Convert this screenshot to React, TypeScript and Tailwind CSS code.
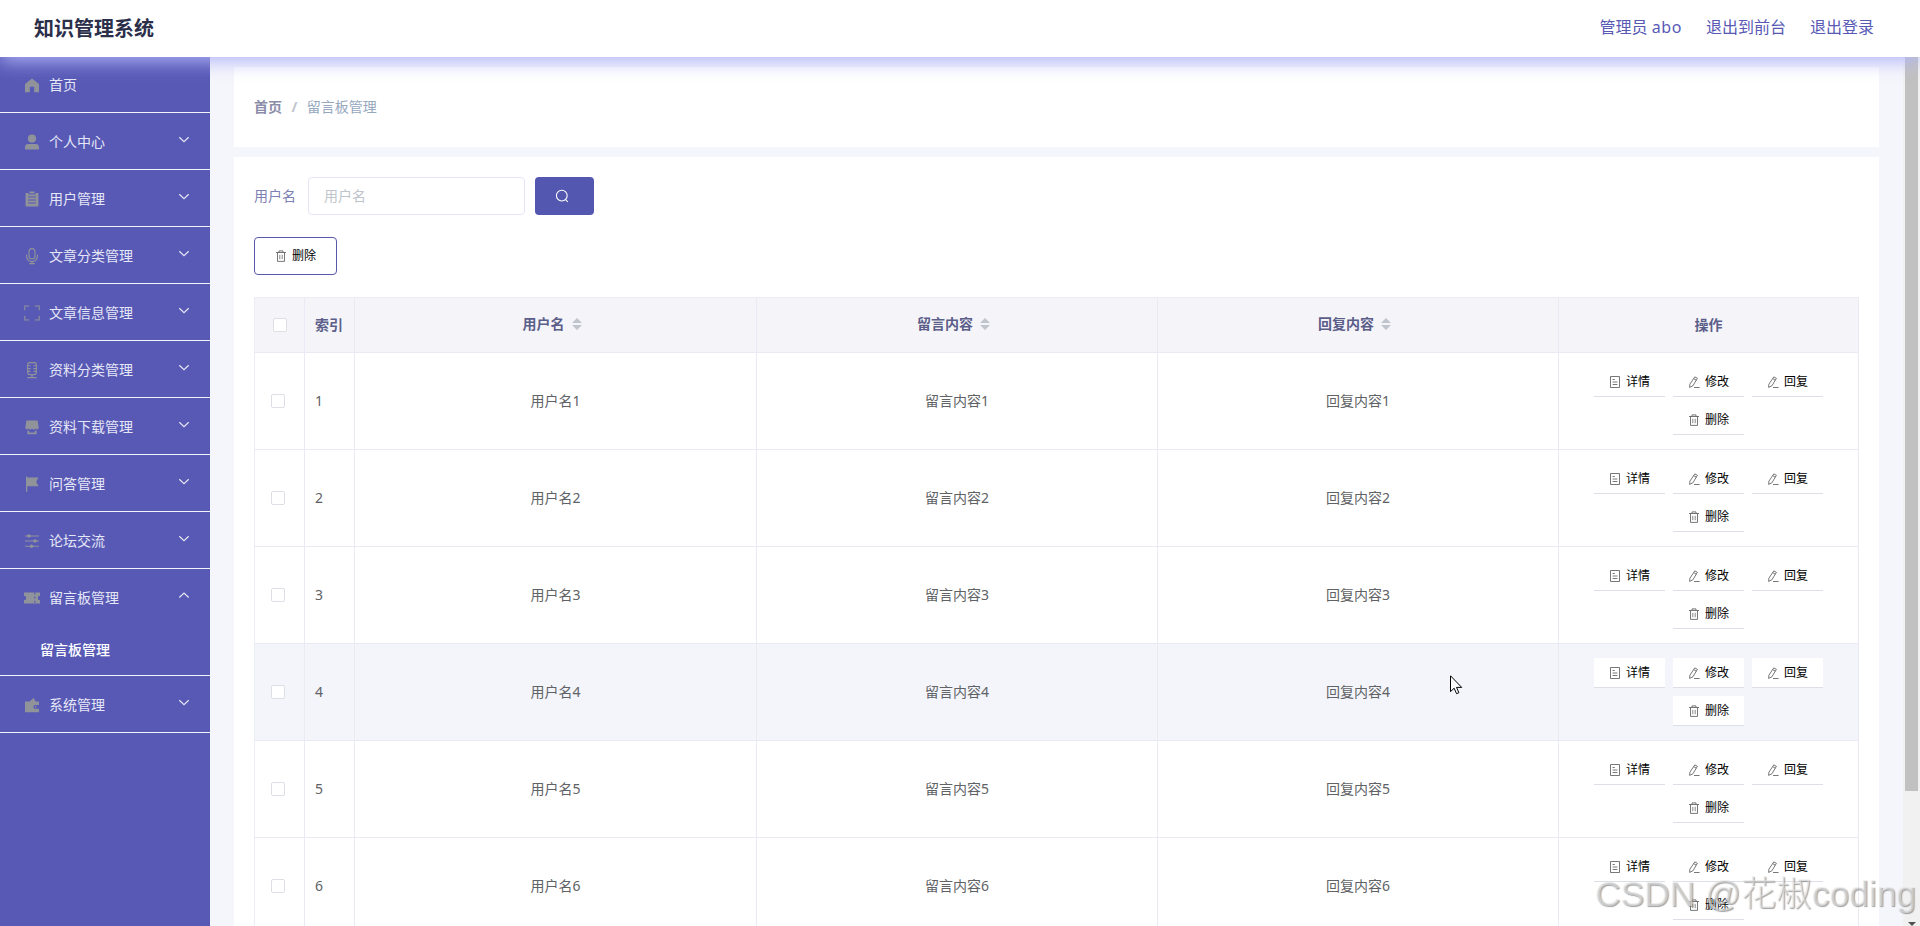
import React, { useState } from "react";

interface IconProps {
  className?: string;
}

interface MenuEntry {
  label: string;
  icon: React.ReactNode;
  children?: string[];
}

const menu: MenuEntry[] = [
  {
    label: "首页",
    icon: <path d="M9 2.6 2 8v8.2h4.8v-5.4h4.4v5.4H16V8z" fill="currentColor" stroke="none" />,
  },
  {
    label: "个人中心",
    children: ["个人信息"],
    icon: (
      <g fill="currentColor" stroke="none">
        <circle cx="9" cy="5.6" r="4.1" />
        <path d="M2 16.6v-2.2a3.4 3.4 0 0 1 3.4-3.4h7.2a3.4 3.4 0 0 1 3.4 3.4v2.2z" />
      </g>
    ),
  },
  {
    label: "用户管理",
    children: ["用户"],
    icon: (
      <>
        <path d="M2.6 3h2.9v1.6h7V3h2.9v13.6H2.6zM6.5 1.6h5v2h-5z" fill="currentColor" stroke="none" />
        <path d="M5 7h8M5 10h8M5 13h8" stroke="#5759b5" />
      </>
    ),
  },
  {
    label: "文章分类管理",
    children: ["文章分类"],
    icon: (
      <>
        <rect x="6" y="1.6" width="6" height="10.4" rx="3" />
        <path d="M3.6 7.4v1.8a5.4 5.4 0 0 0 10.8 0V7.4M9 14.6v2M6.2 16.6h5.6" />
      </>
    ),
  },
  {
    label: "文章信息管理",
    children: ["文章信息"],
    icon: <path d="M1.8 6.2V2h4.4M11.8 2h4.4v4.2M16.2 11.8V16h-4.4M6.2 16H1.8v-4.2" />,
  },
  {
    label: "资料分类管理",
    children: ["资料分类"],
    icon: (
      <>
        <rect x="4.6" y="1.6" width="8.8" height="12" rx="2.4" />
        <path d="M4.6 4.8h3M4.6 7.6h3M4.6 10.4h3M13.4 4.8h-3M13.4 7.6h-3M13.4 10.4h-3M9 13.6v3M4.4 16.6h9.2" />
      </>
    ),
  },
  {
    label: "资料下载管理",
    children: ["资料下载"],
    icon: (
      <g fill="currentColor" stroke="none">
        <path d="M3.4 2.4h11.2l1.1 7.2a1.8 1.8 0 0 1-3.3 1 2 2 0 0 1-3.4 0 2 2 0 0 1-3.4 0 1.8 1.8 0 0 1-3.3-1z" />
        <path d="M4.4 12.8h1.8v1.6h5.6v-1.6h1.8v3.4H4.4z" />
      </g>
    ),
  },
  {
    label: "问答管理",
    children: ["问答"],
    icon: <path d="M3 1.4h1.3v1h11.2l-2.3 4.4 2.3 4.4H4.3v5.6H3z" fill="currentColor" stroke="none" />,
  },
  {
    label: "论坛交流",
    children: ["论坛"],
    icon: (
      <>
        <path d="M2 4h14M2 9h14M2 14.2h14" />
        <g fill="currentColor" stroke="none">
          <circle cx="6" cy="4" r="1.8" />
          <circle cx="12" cy="9" r="1.8" />
          <circle cx="8.5" cy="14.2" r="1.8" />
        </g>
      </>
    ),
  },
  {
    label: "留言板管理",
    children: ["留言板管理"],
    icon: (
      <>
        <path d="M1 3.4h16v3.4a2.2 2.2 0 0 0 0 4.4v3.4H1v-3.4a2.2 2.2 0 0 0 0-4.4z" fill="currentColor" stroke="none" />
        <path d="M11.8 3.4v11.2" stroke="#5759b5" strokeDasharray="2 2.2" />
      </>
    ),
  },
  {
    label: "系统管理",
    children: ["轮播图管理"],
    icon: (
      <>
        <path d="M2 5.4h4.6l4-3.4 2.2 3.4H16V9h-3.6a1.8 1.8 0 0 0 0 3.8H16v3.4H2z" fill="currentColor" stroke="none" />
        <circle cx="12.8" cy="10.9" r="0.8" fill="currentColor" stroke="none" />
      </>
    ),
  },
];

const columns = ["用户名", "留言内容", "回复内容"];
const rows = [1, 2, 3, 4, 5, 6];
const gridCols = "grid grid-cols-[50px_50px_402px_401px_401px_300px]";

function DeleteIcon({ className }: IconProps) {
  return (
    <svg viewBox="0 0 12 12" fill="none" stroke="#555" strokeWidth="0.8" className={className}>
      <path d="M1 2.5h10M4 2.5V.9h4v1.6M2.5 2.5v8.9h7V2.5" />
      <path d="M4.8 4.8v4.4M7.2 4.8v4.4" strokeWidth="0.7" />
    </svg>
  );
}

function DocumentIcon({ className }: IconProps) {
  return (
    <svg viewBox="0 0 12 12" fill="none" stroke="#555" strokeWidth="0.8" className={className}>
      <path d="M1.5 .5h9v11h-9zM3.6 3.5h2.2M3.6 6h4.8M3.6 8.5h4.8" />
    </svg>
  );
}

function EditIcon({ className }: IconProps) {
  return (
    <svg viewBox="0 0 12 12" fill="none" stroke="#555" strokeWidth="0.8" className={className}>
      <path d="M6.8.9 9.4 2.3 4.9 9.8 1.6 11.4 1.9 8.2zM5.8 2.7l2.5 1.5M6 11.5h5.6" strokeLinejoin="round" />
    </svg>
  );
}

function Chevron({ open }: { open: boolean }) {
  return (
    <svg viewBox="0 0 12 12" fill="none" stroke="currentColor" strokeWidth="1.2" className="mr-5 size-3 -translate-y-[1.5px]">
      <path d={open ? "M1.3 8 6 3.6 10.7 8" : "M1.3 3.8 6 8.2l4.7-4.4"} />
    </svg>
  );
}

function Checkbox() {
  return <span className="block size-3.5 rounded-xs border border-[#dcdfe6] bg-white" />;
}

function SortCaret() {
  return (
    <svg viewBox="0 0 24 14" fill="#c0c4cc" className="h-3.5 w-6">
      <path d="M7 6 12 1l5 5zM7 8l5 5 5-5z" />
    </svg>
  );
}

function RowButton({ label, icon }: { label: string; icon: React.ReactNode }) {
  return (
    <button className="flex h-[30px] w-[71px] items-center justify-center gap-[5px] border-b border-[#dcdfe6] bg-white text-xs text-black">
      {icon}
      <span>{label}</span>
    </button>
  );
}

function Sidebar() {
  const [opened, setOpened] = useState("留言板管理");

  return (
    <aside className="w-[210px] shrink-0 bg-[#5759b5] text-sm text-[#e6e7f6]">
      <ul className="-mt-px">
        {menu.map((item) => {
          const open = opened === item.label;
          return (
            <li key={item.label} className="border-b border-[#f3f3fb]">
              <div
                className="flex h-14 cursor-pointer items-center pl-[23px]"
                onClick={() => setOpened(open ? "" : item.label)}
              >
                <svg
                  viewBox="0 0 18 18"
                  fill="none"
                  stroke="currentColor"
                  strokeWidth="1.1"
                  className="mr-2 size-[18px] translate-y-px text-[#909399]"
                >
                  {item.icon}
                </svg>
                <span className="flex-1 pt-px">{item.label}</span>
                {item.children && <Chevron open={open} />}
              </div>
              {open &&
                item.children?.map((child) => (
                  <div key={child} className="flex h-[50px] items-center pb-px pl-10 font-medium text-white">
                    {child}
                  </div>
                ))}
            </li>
          );
        })}
      </ul>
    </aside>
  );
}

function MessageTable() {
  return (
    <div className="mt-[22px] w-[1605px] border-t border-l border-[#ebeef5] text-sm">
      <div className={`${gridCols} h-[55px] bg-[#f5f5f9] font-bold text-[#5c5e8a]`}>
        <div className="flex items-center border-r border-b border-[#e9eaf3] pl-[18px]">
          <Checkbox />
        </div>
        <div className="flex items-center border-r border-b border-[#e9eaf3] pl-2.5">索引</div>
        {columns.map((name) => (
          <div key={name} className="flex items-center justify-center border-r border-b border-[#e9eaf3] pb-0.5">
            {name}
            <SortCaret />
          </div>
        ))}
        <div className="flex items-center justify-center border-r border-b border-[#e9eaf3]">操作</div>
      </div>
      {rows.map((n) => (
        <div key={n} className={`${gridCols} h-[97px] text-[#606266] ${n === 4 ? "bg-[#f3f5fa]" : "bg-white"}`}>
          <div className="flex items-center border-r border-b border-[#e9eaf3] pl-4">
            <Checkbox />
          </div>
          <div className="flex items-center border-r border-b border-[#e9eaf3] pl-2.5">{n}</div>
          {columns.map((name) => (
            <div key={name} className="flex items-center justify-center border-r border-b border-[#e9eaf3]">
              {name}
              {n}
            </div>
          ))}
          <div className="flex flex-wrap content-center justify-center gap-2 border-r border-b border-[#e9eaf3] px-6">
            <RowButton label="详情" icon={<DocumentIcon className="size-3" />} />
            <RowButton label="修改" icon={<EditIcon className="size-3" />} />
            <RowButton label="回复" icon={<EditIcon className="size-3" />} />
            <RowButton label="删除" icon={<DeleteIcon className="size-3" />} />
          </div>
        </div>
      ))}
    </div>
  );
}

export default function App() {
  return (
    <div className="relative flex h-screen flex-col overflow-hidden bg-[#f5f6fb] font-['Noto_Sans','Noto_Sans_CJK_SC',sans-serif]">
      <header className="relative z-10 flex h-[57px] shrink-0 items-center justify-between bg-white pr-[46px] pl-[34px] shadow-[0_4px_18px_#b2b4fa]">
        <h1 className="text-xl font-bold text-[#2b2f4a]">知识管理系统</h1>
        <nav className="flex gap-6 pb-[3px] text-base text-[#5759b5]">
          <span>
            管理员 <span className="tracking-[0.6px]">abo</span>
          </span>
          <span>退出到前台</span>
          <span>退出登录</span>
        </nav>
      </header>

      <div className="flex min-h-0 flex-1">
        <Sidebar />

        <main className="flex min-w-0 flex-1 flex-col gap-2.5 overflow-hidden px-6 pt-2.5">
          <div className="flex h-20 shrink-0 items-center bg-white px-5 text-sm">
            <span className="font-bold text-[#8a8ca8]">首页</span>
            <span className="mx-[9.5px] font-bold text-[#c0c4cc]">/</span>
            <span className="text-[#97a8be]">留言板管理</span>
          </div>

          <section className="shrink-0 bg-white p-5">
            <div className="flex h-[38px] items-center text-sm">
              <label className="mr-3 pb-px text-[#7d80b2]">用户名</label>
              <input
                placeholder="用户名"
                className="h-full w-[217px] rounded border border-[#e6e6f8] px-[15px] pb-0.5 outline-none placeholder:text-[#c0c4cc]"
              />
              <button className="ml-2.5 h-full w-[59px] rounded bg-[#5457b0] pl-5 text-white">
                <svg viewBox="0 0 14 14" fill="none" stroke="currentColor" strokeWidth="1.1" className="size-3.5">
                  <circle cx="6.8" cy="6.6" r="5.4" />
                  <path d="m10.6 10.6 2.2 2.4" />
                </svg>
              </button>
            </div>

            <button className="mt-[22px] flex h-[38px] w-[83px] items-center justify-center gap-[5px] rounded border border-[#5759a8] text-xs text-black">
              <DeleteIcon className="size-3" />
              <span>删除</span>
            </button>

            <MessageTable />
          </section>
        </main>

        <div className="flex w-[17px] shrink-0 flex-col items-center justify-between bg-[#f1f1f1]">
          <div className="h-[734px] w-[13px] bg-[#c1c1c1]" />
          <svg viewBox="0 0 8 4" fill="#505050" className="h-1 w-2">
            <path d="M0 0h8L4 4z" />
          </svg>
        </div>
      </div>

      <svg viewBox="0 0 13 20" fill="white" stroke="black" className="absolute top-[675px] left-[1450px] z-20 h-5 w-[13px]">
        <path d="M.5.8v15.8l3.6-3.4 2.5 5.5 2.3-1-2.4-5.3h5.2z" />
      </svg>

      <div className="pointer-events-none absolute right-[4px] bottom-1.5 z-20 font-['Liberation_Sans','Noto_Sans_CJK_SC',sans-serif] text-[35.4px] leading-[52px] font-light whitespace-nowrap text-[#e8e8e8]/60 [text-shadow:1px_1px_1px_rgba(110,110,110,0.65)]">
        CSDN @花椒coding
      </div>
    </div>
  );
}
